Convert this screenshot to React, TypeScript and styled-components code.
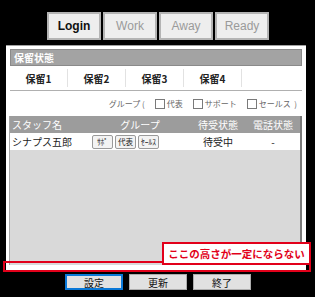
import React from "react";
import styled, { createGlobalStyle } from "styled-components";

const Global = createGlobalStyle`
  html, body { margin: 0; padding: 0; background: #000; }
  body { font-family: "Noto Sans CJK JP", "Noto Sans", sans-serif; }
`;

const Page = styled.div`
  position: relative;
  width: 315px;
  height: 297px;
  background: #000;
  display: flex;
  flex-direction: column;
  align-items: stretch;
  overflow: hidden;
`;

const TabBar = styled.div`
  display: flex;
  justify-content: center;
  gap: 2px;
  padding-top: 12px;
  padding-left: 1px;
`;

const Tab = styled.div<{ $active?: boolean }>`
  box-sizing: border-box;
  width: 54px;
  height: 28px;
  border: 2px solid #b4b4b4;
  background: #eeeeee;
  display: flex;
  align-items: center;
  justify-content: center;
  font-family: "Liberation Sans", Arial, sans-serif;
  font-size: 12px;
  font-weight: ${(p) => (p.$active ? 700 : 400)};
  color: ${(p) => (p.$active ? "#111" : "#9a9a9a")};
`;

const Panel = styled.div`
  box-sizing: border-box;
  margin: 5px 9px 0 6px;
  height: 225px;
  background: #fff;
  border-top: 1px solid #a0a0a0;
  padding: 3px 4px 5px 4px;
  display: flex;
  flex-direction: column;
`;

const Header = styled.div`
  box-sizing: border-box;
  height: 17px;
  background: #a3a3a3;
  border: 1px solid #8a8a8a;
  color: #fff;
  font-size: 10px;
  font-weight: 700;
  display: flex;
  align-items: center;
  padding-left: 3px;
`;

const HoldRow = styled.div`
  box-sizing: border-box;
  height: 25px;
  border-bottom: 1px solid #b0b0b0;
  display: flex;
  align-items: center;
`;

const HoldCell = styled.div`
  box-sizing: border-box;
  width: 58px;
  height: 18px;
  border-right: 1px solid #e2e2e2;
  display: flex;
  align-items: center;
  justify-content: center;
  font-size: 10px;
  font-weight: 700;
  color: #222;
`;

const GroupRow = styled.div`
  height: 25px;
  display: flex;
  align-items: center;
  justify-content: flex-end;
  padding-right: 5px;
  gap: 2px;
  font-size: 8px;
  color: #666;
  white-space: pre;
`;

const Check = styled.span`
  box-sizing: border-box;
  display: inline-block;
  width: 10px;
  height: 10px;
  border: 1px solid #7a7a7a;
  background: #fff;
  margin-left: 8px;
`;

const Table = styled.div`
  margin-left: -1px;
  flex: 1;
  display: flex;
  flex-direction: column;
  border-left: 1px solid #a8a8a8;
  border-right: 2px solid #7a7a7a;
  background: #d9d9d9;
`;

const Row = styled.div<{ $head?: boolean }>`
  height: 17px;
  display: grid;
  grid-template-columns: 80px 100px 56px 1fr;
  align-items: center;
  background: ${(p) => (p.$head ? "#9c9c9c" : "#fff")};
  color: ${(p) => (p.$head ? "#fff" : "#222")};
  font-size: 10px;
`;

const Cell = styled.div<{ $left?: boolean }>`
  padding-left: ${(p) => (p.$left ? "2px" : "0")};
  white-space: nowrap;
  display: flex;
  justify-content: ${(p) => (p.$left ? "flex-start" : "center")};
  align-items: center;
`;

const GroupButtons = styled.div`
  display: flex;
  gap: 2px;
  padding-left: 2px;
`;

const MiniButton = styled.span`
  box-sizing: border-box;
  width: 21px;
  height: 14px;
  border: 1px solid #9a9a9a;
  border-radius: 2px;
  background: #f3f3f3;
  font-size: 7.5px;
  display: flex;
  align-items: center;
  justify-content: center;
  color: #222;
  white-space: nowrap;
  overflow: hidden;
`;

const Footer = styled.div`
  display: flex;
  justify-content: center;
  gap: 6px;
  margin-top: 4px;
  padding-left: 1px;
`;

const FootButton = styled.div<{ $focus?: boolean }>`
  box-sizing: border-box;
  width: 58px;
  height: 16px;
  background: #e1e1e1;
  border: 1px solid ${(p) => (p.$focus ? "#0a78d7" : "#adadad")};
  box-shadow: ${(p) => (p.$focus ? "inset 0 0 0 1px #0a78d7" : "none")};
  font-size: 10px;
  color: #111;
  display: flex;
  align-items: center;
  justify-content: center;
`;

const Mark = styled.div`
  position: absolute;
  left: 3px;
  top: 261px;
  width: 308px;
  height: 11px;
  box-sizing: border-box;
  border: 2px solid #e2001a;
`;

const Note = styled.div`
  position: absolute;
  left: 162px;
  top: 242px;
  width: 149px;
  height: 23px;
  box-sizing: border-box;
  border: 2px solid #e2001a;
  background: #fff;
  color: #e2001a;
  font-size: 10.5px;
  font-weight: 700;
  display: flex;
  align-items: center;
  justify-content: center;
  white-space: nowrap;
`;

export default function App() {
  return (
    <Page>
      <Global />
      <TabBar>
        <Tab $active>Login</Tab>
        <Tab>Work</Tab>
        <Tab>Away</Tab>
        <Tab>Ready</Tab>
      </TabBar>
      <Panel>
        <Header>保留状態</Header>
        <HoldRow>
          <HoldCell>保留1</HoldCell>
          <HoldCell>保留2</HoldCell>
          <HoldCell>保留3</HoldCell>
          <HoldCell>保留4</HoldCell>
        </HoldRow>
        <GroupRow>
          <span>グループ (</span>
          <Check />
          <span>代表</span>
          <Check />
          <span>サポート</span>
          <Check />
          <span>セールス  )</span>
        </GroupRow>
        <Table>
          <Row $head>
            <Cell $left>スタッフ名</Cell>
            <Cell>グループ</Cell>
            <Cell>待受状態</Cell>
            <Cell>電話状態</Cell>
          </Row>
          <Row>
            <Cell $left>シナプス五郎</Cell>
            <GroupButtons>
              <MiniButton>ｻﾎﾟ</MiniButton>
              <MiniButton>代表</MiniButton>
              <MiniButton>ｾｰﾙｽ</MiniButton>
            </GroupButtons>
            <Cell>待受中</Cell>
            <Cell>-</Cell>
          </Row>
        </Table>
      </Panel>
      <Footer>
        <FootButton $focus>設定</FootButton>
        <FootButton>更新</FootButton>
        <FootButton>終了</FootButton>
      </Footer>
      <Mark />
      <Note>ここの高さが一定にならない</Note>
    </Page>
  );
}
